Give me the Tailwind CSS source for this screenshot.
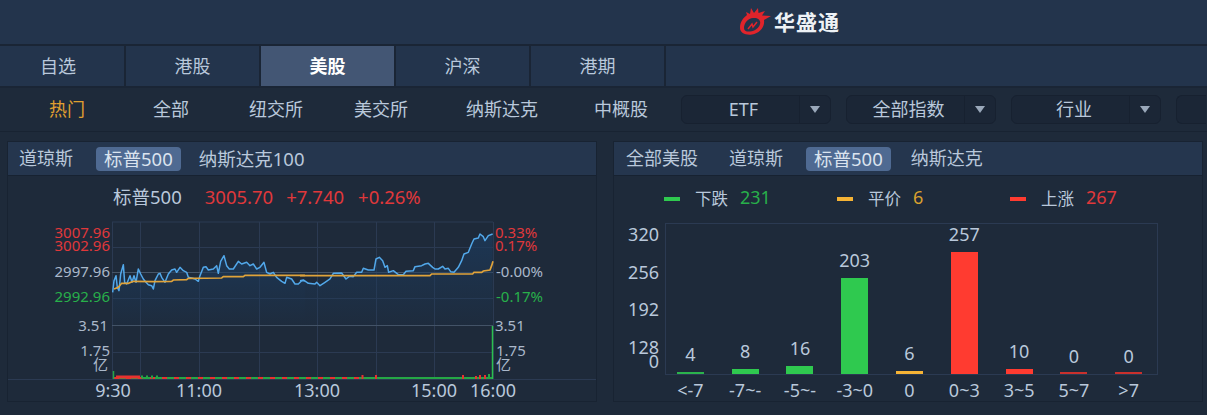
<!DOCTYPE html>
<html lang="zh">
<head>
  <meta charset="UTF-8" />
  <title>华盛通</title>
  <script src="https://cdn.jsdelivr.net/npm/@tailwindcss/browser@4"></script>
</head>
<body class="w-[1207px] h-[415px] overflow-hidden bg-[#1e2a3a] text-[#b9c8db] text-[18px] font-['Noto_Sans','Noto_Sans_CJK_SC',sans-serif]">

  <!-- logo bar -->
  <header class="h-[46px] bg-[#23344c] border-b-2 border-[#1a2535] flex items-center pl-[740px]">
    <svg class="w-[34px] h-[30px] -mt-[2px]" viewBox="740 9 34 30">
      <path fill="#e0242b" fill-rule="evenodd" d="M740 31C740 25 743 21 747 18L746 15L750 17L751 11L754 16L758 11L758.5 16L765 14L762 18.5L771 19L764 23C765 30 760 36 752 37.5C746 38.5 740 36 740 31ZM744 31C744 26 748 21.5 753 21C758 20.5 761 23 760 27C759 31 755 34 750 34.5C747 35 744 34 744 31Z" />
      <polyline points="748,32 752,27 753,30 757,25" fill="none" stroke="#e0242b" stroke-width="1.5" />
    </svg>
    <span class="text-[21px] font-bold text-[#eef2f6] tracking-[1px] leading-none">华盛通</span>
  </header>

  <!-- market tabs -->
  <nav class="h-[42px] bg-[#23344c] border-b-2 border-[#1a2535] flex">
    <div class="w-[126px] flex items-center justify-center pr-[8px] pt-[1px] border-r-2 border-[#1a2535]">自选</div>
    <div class="w-[135px] flex items-center justify-center pt-[1px] border-r-2 border-[#1a2535]">港股</div>
    <div class="w-[135px] flex items-center justify-center pt-[1px] border-r-2 border-[#1a2535] bg-[#435674] text-white font-bold">美股</div>
    <div class="w-[135px] flex items-center justify-center pt-[1px] border-r-2 border-[#1a2535]">沪深</div>
    <div class="w-[135px] flex items-center justify-center pt-[1px] border-r-2 border-[#1a2535]">港期</div>
  </nav>

  <!-- sub filters -->
  <div class="h-[44px] flex items-center pl-[16px] border-b border-[#182332]">
    <div class="w-[102px] shrink-0 text-center text-[#e0a030]">热门</div>
    <div class="w-[106px] shrink-0 text-center">全部</div>
    <div class="w-[104px] shrink-0 text-center">纽交所</div>
    <div class="w-[106px] shrink-0 text-center">美交所</div>
    <div class="w-[136px] shrink-0 text-center">纳斯达克</div>
    <div class="w-[102px] shrink-0 text-center">中概股</div>
    <div class="ml-[9px] flex gap-[15px] shrink-0">
      <div class="w-[150px] h-[29px] shrink-0 flex bg-[#1b2636] border border-[#172130] rounded-md">
        <div class="flex-1 flex items-center justify-center pl-[6px]">ETF</div>
        <div class="w-[31px] flex items-center justify-center border-l border-[#172130]"><div class="w-0 h-0 border-x-[5px] border-x-transparent border-t-[7px] border-t-[#9aa8ba]"></div></div>
      </div>
      <div class="w-[150px] h-[29px] shrink-0 flex bg-[#1b2636] border border-[#172130] rounded-md">
        <div class="flex-1 flex items-center justify-center pl-[6px]">全部指数</div>
        <div class="w-[31px] flex items-center justify-center border-l border-[#172130]"><div class="w-0 h-0 border-x-[5px] border-x-transparent border-t-[7px] border-t-[#9aa8ba]"></div></div>
      </div>
      <div class="w-[150px] h-[29px] shrink-0 flex bg-[#1b2636] border border-[#172130] rounded-md">
        <div class="flex-1 flex items-center justify-center pl-[7px]">行业</div>
        <div class="w-[31px] flex items-center justify-center border-l border-[#172130]"><div class="w-0 h-0 border-x-[5px] border-x-transparent border-t-[7px] border-t-[#9aa8ba]"></div></div>
      </div>
      <div class="w-[30px] h-[29px] shrink-0 bg-[#1b2636] border border-r-0 border-[#172130] rounded-l-md"></div>
    </div>
  </div>

  <main class="flex gap-[16px] pl-[7px] pt-[9px]">
    <!-- index chart -->
    <section class="w-[590px] h-[261px] border border-[#182332] flex flex-col">
      <div class="h-[34px] shrink-0 bg-[#25364e] border-b border-[#172231] flex items-center pl-[11px]">
        <span>道琼斯</span>
        <span class="ml-[23px] px-[8px] h-[24px] flex items-center bg-[#4f6a92] rounded text-[18.5px] text-[#dbe4ef]">标普500</span>
        <span class="ml-[18px] text-[18.5px]">纳斯达克100</span>
      </div>
      <div class="h-[38px] shrink-0 flex items-center pl-[105px] pt-[4px] text-[18.5px]">
        <span>标普500</span>
        <span class="ml-[23px] text-[#e0383a]">3005.70</span>
        <span class="ml-[13px] text-[#e0383a]">+7.740</span>
        <span class="ml-[14px] text-[#e0383a]">+0.26%</span>
      </div>
      <svg class="w-[588px] h-[187px] block" viewBox="8 215 588 187">
        <defs>
          <linearGradient id="areaFill" x1="0" y1="0" x2="0" y2="1">
            <stop offset="0" stop-color="#1c3a5c" stop-opacity="0.75" />
            <stop offset="1" stop-color="#1c3a5c" stop-opacity="0.1" />
          </linearGradient>
        </defs>
        <!-- grid -->
        <g stroke="#2b3a52" stroke-width="1" fill="none">
          <path d="M112 223H493M112 248.5H493M112 299.5H493M112 353.5H493" />
          <path d="M112.5 223V380M140.5 223V380M199.5 223V380M259.5 223V380M317.5 223V380M376.5 223V380M434.5 223V380M493.5 223V380" />
          <path d="M8 380.5H596" />
        </g>
        <path d="M112 273.5H493M112 326.5H493" stroke="#465568" stroke-width="1" fill="none" />

        <!-- area + price line, left half -->
        <g transform="translate(110 225) scale(0.3333)">
          <path fill="url(#areaFill)" stroke="none" d="M8 205L12 170L18 155L22 190L27 200L32 150L40 122L44 175L50 180L60 155L66 175L72 155L78 175L85 135L92 150L100 165L108 175L115 182L125 185L130 195L135 170L145 150L150 148L155 160L165 175L175 150L185 138L195 135L200 145L210 130L220 140L230 145L235 160L245 162L255 165L265 172L270 155L280 130L288 128L295 138L310 135L320 125L325 148L332 112L342 95L350 125L358 135L370 135L385 112L395 120L410 115L420 125L430 120L440 135L450 130L462 115L470 145L480 150L490 145L500 160L515 172L525 178L530 160L545 165L555 180L565 180L575 170L585 170L585 305L8 305Z" />
          <polyline fill="none" stroke="#52a8ea" stroke-width="4.5" stroke-linejoin="round" points="8,205 12,170 18,155 22,190 27,200 32,150 40,122 44,175 50,180 60,155 66,175 72,155 78,175 85,135 92,150 100,165 108,175 115,182 125,185 130,195 135,170 145,150 150,148 155,160 165,175 175,150 185,138 195,135 200,145 210,130 220,140 230,145 235,160 245,162 255,165 265,172 270,155 280,130 288,128 295,138 310,135 320,125 325,148 332,112 342,95 350,125 358,135 370,135 385,112 395,120 410,115 420,125 430,120 440,135 450,130 462,115 470,145 480,150 490,145 500,160 515,172 525,178 530,160 545,165 555,180 565,180 575,170 585,170" />
          <polyline fill="none" stroke="#e0a33a" stroke-width="5" points="12,195 25,190 35,178 55,178 70,172 130,173 185,172 190,168 230,167 235,163 335,162 340,158 400,158 405,154 585,154" />
        </g>
        <!-- area + price line, right half -->
        <g transform="translate(300 225) scale(0.3333)">
          <path fill="url(#areaFill)" stroke="none" d="M15 170L25 178L45 180L50 175L60 185L75 175L90 165L100 148L125 147L138 165L148 157L160 158L170 145L185 145L190 133L205 138L222 138L228 105L238 100L248 110L255 130L262 125L266 145L280 140L295 152L310 152L318 142L340 140L345 128L365 125L375 120L385 118L398 130L405 135L415 135L428 127L435 135L445 133L452 143L462 145L475 130L485 110L492 90L505 85L515 60L522 45L535 42L540 30L550 38L555 50L565 35L578 30L578 305L15 305Z" />
          <polyline fill="none" stroke="#52a8ea" stroke-width="4.5" stroke-linejoin="round" points="0,170 10,168 25,178 45,180 50,175 60,185 75,175 90,165 100,148 125,147 138,165 148,157 160,158 170,145 185,145 190,133 205,138 222,138 228,105 238,100 248,110 255,130 262,125 266,145 280,140 295,152 310,152 318,142 340,140 345,128 365,125 375,120 385,118 398,130 405,135 415,135 428,127 435,135 445,133 452,143 462,145 475,130 485,110 492,90 505,85 515,60 522,45 535,42 540,30 550,38 555,50 565,35 578,30" />
          <polyline fill="none" stroke="#e0a33a" stroke-width="5" points="0,155 390,155 395,150 518,150 522,145 545,145 550,141 570,138 575,125 579,112" />
        </g>

        <!-- volume -->
        <path d="M113 379H493" stroke="#25a745" stroke-width="2" />
        <path d="M114 379H360" stroke="#e8322f" stroke-width="2" stroke-dasharray="5 7" />
        <path d="M116 378H140" stroke="#e8322f" stroke-width="3" />
        <path d="M141 378H158" stroke="#25a745" stroke-width="3" stroke-dasharray="2 3" />
        <path d="M113.5 372V380" stroke="#25a745" stroke-width="1.5" />
        <path d="M362.5 376V380M376 376V380M463 376V380M476 377V380M480 376V380M485 376V380" stroke="#e8322f" stroke-width="2" />
        <path d="M489 375V380" stroke="#25a745" stroke-width="2" />
        <path d="M492.5 327V380" stroke="#2bc04f" stroke-width="1.5" />

        <!-- axis labels -->
        <g class="text-[15px]" text-anchor="end" dominant-baseline="central">
          <text x="110" y="233" fill="#e0383a">3007.96</text>
          <text x="110" y="246" fill="#e0383a">3002.96</text>
          <text x="110" y="272" fill="#aab8ca">2997.96</text>
          <text x="110" y="297" fill="#28b04a">2992.96</text>
          <text x="108" y="326" fill="#aab8ca">3.51</text>
          <text x="110" y="351" fill="#aab8ca">1.75</text>
          <text x="108" y="365" fill="#aab8ca">亿</text>
        </g>
        <g class="text-[15px]" dominant-baseline="central">
          <text x="495" y="233" fill="#e0383a">0.33%</text>
          <text x="495" y="246" fill="#e0383a">0.17%</text>
          <text x="496" y="272" fill="#aab8ca">-0.00%</text>
          <text x="496" y="297" fill="#28b04a">-0.17%</text>
          <text x="495" y="326" fill="#aab8ca">3.51</text>
          <text x="496" y="351" fill="#aab8ca">1.75</text>
          <text x="496" y="365" fill="#aab8ca">亿</text>
        </g>
        <g class="text-[18px]" text-anchor="middle" dominant-baseline="central" fill="#b9c8db">
          <text x="113" y="391">9:30</text>
          <text x="199" y="391">11:00</text>
          <text x="317" y="391">13:00</text>
          <text x="434" y="391">15:00</text>
          <text x="493" y="391">16:00</text>
        </g>
      </svg>
    </section>

    <!-- distribution chart -->
    <section class="w-[590px] h-[261px] border border-[#182332] flex flex-col">
      <div class="h-[34px] shrink-0 bg-[#25364e] border-b border-[#172231] flex items-center pl-[12px]">
        <span>全部美股</span>
        <span class="ml-[31px]">道琼斯</span>
        <span class="ml-[23px] px-[8px] h-[24px] flex items-center bg-[#4f6a92] rounded text-[18.5px] text-[#dbe4ef]">标普500</span>
        <span class="ml-[20px]">纳斯达克</span>
      </div>
      <div class="h-[47px] shrink-0 flex items-center pl-[50px] pb-[2px] text-[16.5px]">
        <div class="w-[173px] flex items-center">
          <div class="w-[16px] h-[4px] bg-[#2fc94f]"></div>
          <span class="ml-[15px] mt-[2px]">下跌</span>
          <span class="ml-[12px] text-[18px] text-[#28b04a] -mt-[2px]">231</span>
        </div>
        <div class="w-[173px] flex items-center">
          <div class="w-[16px] h-[4px] bg-[#f5b335]"></div>
          <span class="ml-[15px] mt-[2px]">平价</span>
          <span class="ml-[12px] text-[18px] text-[#d9a02e] -mt-[2px]">6</span>
        </div>
        <div class="flex items-center">
          <div class="w-[16px] h-[4px] bg-[#ff3b30]"></div>
          <span class="ml-[15px] mt-[2px]">上涨</span>
          <span class="ml-[12px] text-[18px] text-[#e0383a] -mt-[2px]">267</span>
        </div>
      </div>
      <div class="flex">
        <div class="w-[45px] text-right text-[18px] leading-[37.5px] -mt-[7px]">
          <div>320</div>
          <div>256</div>
          <div>192</div>
          <div>128</div>
          <div class="-mt-[23px]">0</div>
        </div>
        <div class="ml-[6px]">
          <div class="w-[493px] h-[152px] border border-[#2b3a52] flex items-end">
            <div class="w-[493px] shrink-0 -ml-[3px] flex items-end text-[18px] leading-[22px]">
              <div class="flex-1 flex flex-col items-center"><span class="mb-[7px]">4</span><div class="w-[27px] h-[2px] bg-[#2bb34c]"></div></div>
              <div class="flex-1 flex flex-col items-center"><span class="mb-[7px]">8</span><div class="w-[27px] h-[5px] bg-[#2fc94f]"></div></div>
              <div class="flex-1 flex flex-col items-center"><span class="mb-[7px]">16</span><div class="w-[27px] h-[8px] bg-[#2fc94f]"></div></div>
              <div class="flex-1 flex flex-col items-center"><span class="mb-[7px]">203</span><div class="w-[27px] h-[96px] bg-[#2fc94f]"></div></div>
              <div class="flex-1 flex flex-col items-center"><span class="mb-[7px]">6</span><div class="w-[27px] h-[3px] bg-[#f5b335]"></div></div>
              <div class="flex-1 flex flex-col items-center"><span class="mb-[7px]">257</span><div class="w-[27px] h-[122px] bg-[#ff3b30]"></div></div>
              <div class="flex-1 flex flex-col items-center"><span class="mb-[7px]">10</span><div class="w-[27px] h-[5px] bg-[#ff3b30]"></div></div>
              <div class="flex-1 flex flex-col items-center"><span class="mb-[5px]">0</span><div class="w-[27px] h-[2px] bg-[#c9302c]"></div></div>
              <div class="flex-1 flex flex-col items-center"><span class="mb-[5px]">0</span><div class="w-[27px] h-[2px] bg-[#c9302c]"></div></div>
            </div>
          </div>
          <div class="w-[493px] -ml-[2px] flex text-[18px] leading-[24px] pt-[3px] text-center">
            <div class="flex-1">&lt;-7</div>
            <div class="flex-1">-7~-</div>
            <div class="flex-1">-5~-</div>
            <div class="flex-1">-3~0</div>
            <div class="flex-1">0</div>
            <div class="flex-1">0~3</div>
            <div class="flex-1">3~5</div>
            <div class="flex-1">5~7</div>
            <div class="flex-1">&gt;7</div>
          </div>
        </div>
      </div>
    </section>
  </main>
</body>
</html>
